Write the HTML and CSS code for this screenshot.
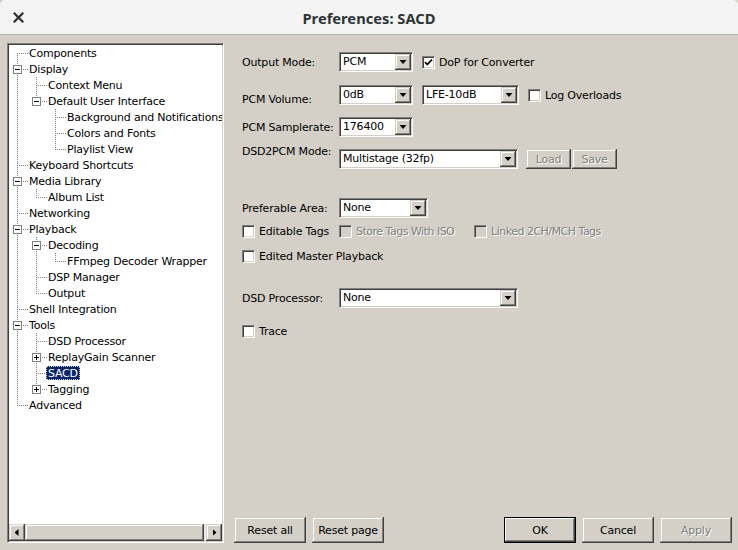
FILE: index.html
```html
<!DOCTYPE html>
<html>
<head>
<meta charset="utf-8">
<link rel="stylesheet" href="styles.css">
</head>
<body>
<div class="titlebar">
  <div class="tb-left">
    <span class="close"><svg width="11" height="11" viewBox="0 0 11 11"><path d="M1.5 1.5 L9.5 9.5 M9.5 1.5 L1.5 9.5" stroke="#2e2e2e" stroke-width="2.2" stroke-linecap="square"/></svg></span>
  </div>
  <div class="title">Preferences: SACD</div>
  <div></div>
</div>
<div class="main">
  <div class="tree">
    <div class="list">
      <div class="row"><span class="c first"></span><span class="t">Components</span></div>
      <div class="row"><span class="c"><i class="box"></i></span><span class="t">Display</span></div>
      <div class="row"><span class="g v"></span><span class="c"></span><span class="t">Context Menu</span></div>
      <div class="row"><span class="g v"></span><span class="c last"><i class="box"></i></span><span class="t">Default User Interface</span></div>
      <div class="row"><span class="g v"></span><span class="g"></span><span class="c"></span><span class="t">Background and Notifications</span></div>
      <div class="row"><span class="g v"></span><span class="g"></span><span class="c"></span><span class="t">Colors and Fonts</span></div>
      <div class="row"><span class="g v"></span><span class="g"></span><span class="c last"></span><span class="t">Playlist View</span></div>
      <div class="row"><span class="c"></span><span class="t">Keyboard Shortcuts</span></div>
      <div class="row"><span class="c"><i class="box"></i></span><span class="t">Media Library</span></div>
      <div class="row"><span class="g v"></span><span class="c last"></span><span class="t">Album List</span></div>
      <div class="row"><span class="c"></span><span class="t">Networking</span></div>
      <div class="row"><span class="c"><i class="box"></i></span><span class="t">Playback</span></div>
      <div class="row"><span class="g v"></span><span class="c"><i class="box"></i></span><span class="t">Decoding</span></div>
      <div class="row"><span class="g v"></span><span class="g v"></span><span class="c last"></span><span class="t">FFmpeg Decoder Wrapper</span></div>
      <div class="row"><span class="g v"></span><span class="c"></span><span class="t">DSP Manager</span></div>
      <div class="row"><span class="g v"></span><span class="c last"></span><span class="t">Output</span></div>
      <div class="row"><span class="c"></span><span class="t">Shell Integration</span></div>
      <div class="row"><span class="c"><i class="box"></i></span><span class="t">Tools</span></div>
      <div class="row"><span class="g v"></span><span class="c"></span><span class="t">DSD Processor</span></div>
      <div class="row"><span class="g v"></span><span class="c"><i class="box plus"></i></span><span class="t">ReplayGain Scanner</span></div>
      <div class="row"><span class="g v"></span><span class="c"></span><span class="t sel">SACD</span></div>
      <div class="row"><span class="g v"></span><span class="c last"><i class="box plus"></i></span><span class="t">Tagging</span></div>
      <div class="row"><span class="c last"></span><span class="t">Advanced</span></div>
    </div>
    <div class="hscroll">
      <span class="sb"><i class="tri-l"></i></span>
      <span class="thumb"></span>
      <span class="sb"><i class="tri-r"></i></span>
    </div>
  </div>
  <div class="right">
    <div class="form">
      <div class="r r1">
        <span class="lab">Output Mode:</span>
        <div class="combo w74"><span class="val">PCM</span><span class="arrow"></span></div>
        <span class="cb checked gap9"><svg width="9" height="9" viewBox="0 0 9 9"><path d="M1 4 L3.3 6.5 L8 1.5" stroke="#000" stroke-width="1.8" fill="none"/></svg></span>
        <span class="cbl">DoP for Converter</span>
      </div>
      <div class="r r2">
        <span class="lab low">PCM Volume:</span>
        <div class="combo w74"><span class="val">0dB</span><span class="arrow"></span></div>
        <div class="combo w97 gap9"><span class="val">LFE-10dB</span><span class="arrow"></span></div>
        <span class="cb gap9"></span>
        <span class="cbl">Log Overloads</span>
      </div>
      <div class="r r3">
        <span class="lab">PCM Samplerate:</span>
        <div class="combo w74"><span class="val">176400</span><span class="arrow"></span></div>
      </div>
      <div class="r r4">
        <span class="lab high">DSD2PCM Mode:</span>
        <div class="combo w179"><span class="val">Multistage (32fp)</span><span class="arrow"></span></div>
        <span class="btn small dis gap8">Load</span>
        <span class="btn small dis gap1">Save</span>
      </div>
      <div class="r r5">
        <span class="lab">Preferable Area:</span>
        <div class="combo w89"><span class="val">None</span><span class="arrow"></span></div>
      </div>
      <div class="r cbrow r6">
        <span class="item i1"><span class="cb"></span><span class="cbl">Editable Tags</span></span>
        <span class="item i2"><span class="cb dis"></span><span class="cbl dis">Store Tags With ISO</span></span>
        <span class="item"><span class="cb dis"></span><span class="cbl dis">Linked 2CH/MCH Tags</span></span>
      </div>
      <div class="r cbrow r7">
        <span class="item"><span class="cb"></span><span class="cbl">Edited Master Playback</span></span>
      </div>
      <div class="r r8">
        <span class="lab">DSD Processor:</span>
        <div class="combo w179"><span class="val">None</span><span class="arrow"></span></div>
      </div>
      <div class="r cbrow r9">
        <span class="item"><span class="cb"></span><span class="cbl">Trace</span></span>
      </div>
    </div>
    <div class="btnrow">
      <span class="btn big">Reset all</span>
      <span class="btn big">Reset page</span>
      <span class="spacer"></span>
      <span class="btn big def">OK</span>
      <span class="btn big">Cancel</span>
      <span class="btn big dis">Apply</span>
    </div>
  </div>
</div>
</body>
</html>
```
FILE: styles.css
```css
html, body { margin: 0; padding: 0; }
body {
  width: 738px;
  height: 550px;
  overflow: hidden;
  background: #d4d0c8;
  font-family: "DejaVu Sans", sans-serif;
  font-size: 11px;
  letter-spacing: -0.2px;
  color: #000;
}

/* title bar */
.titlebar {
  height: 34px;
  border-bottom: 1px solid #b4b1ac;
  background: #f4f4f4;
  display: grid;
  grid-template-columns: 1fr auto 1fr;
  align-items: center;
  border-radius: 5px 5px 0 0;
}
.tb-left { padding-left: 13px; display: flex; align-items: center; }
.close { display: flex; width: 11px; height: 11px; }
.title {
  font-family: "Noto Sans", sans-serif;
  font-weight: bold;
  font-size: 14.7px;
  letter-spacing: 0;
  color: #2e3436;
  padding-top: 1px;
}

/* main */
.main {
  display: flex;
  height: 515px;
  box-sizing: border-box;
  padding: 8px 0 7px 7px;
}

/* tree */
.tree {
  width: 217px;
  flex: none;
  box-sizing: border-box;
  border: 1px solid;
  border-color: #808080 #ffffff #ffffff #808080;
  box-shadow: inset 1px 1px 0 #404040, inset -1px -1px 0 #d4d0c8;
  padding: 1px;
  background: #fff;
  display: flex;
  flex-direction: column;
}
.list { flex: 1; overflow: hidden; }
.row { display: flex; height: 16px; white-space: nowrap; }
.g, .c { flex: none; width: 19px; height: 16px; position: relative; }
.g.v {
  background: repeating-linear-gradient(to bottom, #808080 0 1px, transparent 1px 2px) 8px 0 / 1px 100% no-repeat;
}
.c::before {
  content: "";
  position: absolute;
  left: 8px; top: 0;
  width: 1px; height: 16px;
  background: repeating-linear-gradient(to bottom, #808080 0 1px, transparent 1px 2px);
}
.c.first::before { top: 8px; height: 8px; }
.c.last::before { height: 9px; }
.c::after {
  content: "";
  position: absolute;
  left: 10px; top: 8px;
  width: 9px; height: 1px;
  background: repeating-linear-gradient(to right, #808080 0 1px, transparent 1px 2px);
}
.box {
  position: absolute;
  left: 4px; top: 4px;
  width: 9px; height: 9px;
  box-sizing: border-box;
  border: 1px solid #808080;
  background: #fff;
  z-index: 1;
}
.box::before {
  content: "";
  position: absolute;
  left: 1px; top: 3px;
  width: 5px; height: 1px;
  background: #000;
}
.box.plus::after {
  content: "";
  position: absolute;
  left: 3px; top: 1px;
  width: 1px; height: 5px;
  background: #000;
}
.t {
  padding: 1px 2px 0;
  margin-left: -1px;
  height: 13px;
  line-height: 13px;
  margin-top: 1px;
}
.t.sel {
  background: #0a246a;
  color: #fff;
  outline: 1px dotted #d4d0c8;
  outline-offset: -1px;
}

/* scrollbar */
.hscroll {
  display: flex;
  height: 17px;
  flex: none;
  background: #ebe9e5;
}
.sb, .thumb, .arrow, .btn {
  background: #d4d0c8;
  box-shadow: inset -1px -1px 0 #404040, inset 1px 1px 0 #d4d0c8, inset -2px -2px 0 #808080, inset 2px 2px 0 #ffffff;
}
.sb { width: 16px; flex: none; display: flex; align-items: center; justify-content: center; }
.thumb { flex: 1; margin-right: 2px; }
.tri-l, .tri-r { display: block; width: 4px; height: 7px; background: #000; }
.tri-l { clip-path: polygon(100% 0, 0 50%, 100% 100%); margin-left: -1px; }
.tri-r { clip-path: polygon(0 0, 100% 50%, 0 100%); margin-left: 1px; }

/* right */
.right { flex: 1; display: flex; flex-direction: column; }
.form { padding-left: 18px; }
.r { display: flex; align-items: center; height: 20px; white-space: nowrap; }
.lab { width: 97px; flex: none; line-height: 13px; }
.lab.low { align-self: flex-end; margin-bottom: -1px; }
.lab.high { align-self: flex-start; margin-top: -4px; }
.r1 { margin-top: 9px; }
.r2 { margin-top: 13px; }
.r3 { margin-top: 12px; }
.r4 { margin-top: 12px; }
.r5 { margin-top: 29px; }
.r6 { margin-top: 7px; }
.r7 { margin-top: 12px; }
.r8 { margin-top: 25px; }
.r9 { margin-top: 17px; }
.cbrow { height: 13px; }

.combo {
  display: flex;
  height: 20px;
  box-sizing: border-box;
  border: 1px solid;
  border-color: #808080 #ffffff #ffffff #808080;
  box-shadow: inset 1px 1px 0 #404040, inset -1px -1px 0 #d4d0c8;
  padding: 1px;
  background: #fff;
  flex: none;
}
.w74 { width: 74px; }
.w97 { width: 97px; }
.w89 { width: 89px; }
.w179 { width: 179px; }
.val { flex: 1; line-height: 16px; padding-left: 2px; overflow: hidden; }
.arrow {
  width: 16px; height: 16px; flex: none;
  display: flex; align-items: center; justify-content: center;
}
.arrow::after {
  content: "";
  width: 7px; height: 4px;
  background: #000;
  clip-path: polygon(0 0, 100% 0, 50% 100%);
}
.gap9 { margin-left: 9px; }
.gap8 { margin-left: 8px; }
.gap1 { margin-left: 1px; }

.cb {
  width: 13px; height: 13px; flex: none;
  box-sizing: border-box;
  border: 1px solid;
  border-color: #808080 #ffffff #ffffff #808080;
  box-shadow: inset 1px 1px 0 #404040, inset -1px -1px 0 #d4d0c8;
  background: #fff;
  display: flex; align-items: center; justify-content: center;
}
.cb.dis { background: #d4d0c8; }
.cbl { margin-left: 4px; line-height: 13px; }
.dis { color: #808080; text-shadow: 1px 1px 0 #ffffff; }
.cbl.dis { letter-spacing: -0.5px; }
.item { display: flex; align-items: center; }
.i1 { width: 97px; }
.i2 { width: 135px; }

.btn {
  display: flex; align-items: center; justify-content: center;
  box-sizing: border-box;
  flex: none;
}
.btn.small { width: 45px; height: 20px; }
.btn.big { width: 72px; height: 26px; }
.btn.def {
  border: 1px solid #000;
  box-shadow: inset -1px -1px 0 #404040, inset 1px 1px 0 #ffffff, inset -2px -2px 0 #808080;
}

.btnrow {
  margin-top: auto;
  display: flex;
  gap: 6px;
  padding: 0 6px 0 10px;
  height: 26px;
}
.spacer { flex: 1; }
```
